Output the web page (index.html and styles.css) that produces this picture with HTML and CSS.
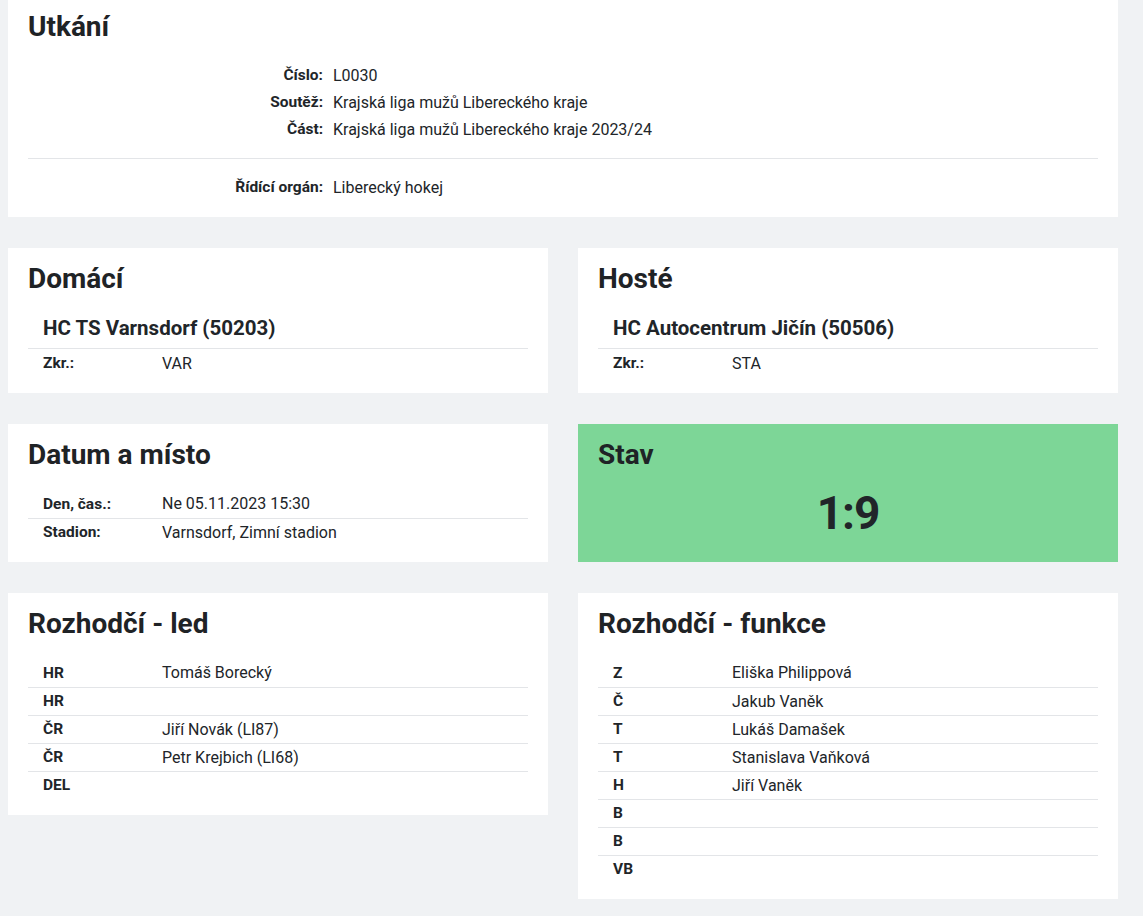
FILE: index.html
```html
<!DOCTYPE html>
<html lang="cs">
<head>
<meta charset="utf-8">
<title>Utkání</title>
<link rel="stylesheet" href="styles.css">
</head>
<body>
<div class="page">
  <section class="card card-wide card-top">
    <h2 class="card-title">Utkání</h2>
    <dl class="info">
      <dt>Číslo:</dt><dd>L0030</dd>
      <dt>Soutěž:</dt><dd>Krajská liga mužů Libereckého kraje</dd>
      <dt>Část:</dt><dd>Krajská liga mužů Libereckého kraje 2023/24</dd>
    </dl>
    <hr class="sep">
    <dl class="info">
      <dt>Řídící orgán:</dt><dd>Liberecký hokej</dd>
    </dl>
  </section>

  <section class="card">
    <h2 class="card-title">Domácí</h2>
    <div class="team">HC TS Varnsdorf (50203)</div>
    <table class="tbl">
      <tr><th>Zkr.:</th><td>VAR</td></tr>
    </table>
  </section>

  <section class="card">
    <h2 class="card-title">Hosté</h2>
    <div class="team">HC Autocentrum Jičín (50506)</div>
    <table class="tbl">
      <tr><th>Zkr.:</th><td>STA</td></tr>
    </table>
  </section>

  <section class="card">
    <h2 class="card-title">Datum a místo</h2>
    <table class="tbl tbl-gap">
      <tr><th>Den, čas.:</th><td>Ne 05.11.2023 15:30</td></tr>
      <tr><th>Stadion:</th><td>Varnsdorf, Zimní stadion</td></tr>
    </table>
  </section>

  <section class="card card-score">
    <h2 class="card-title">Stav</h2>
    <div class="score">1:9</div>
  </section>

  <section class="card card-start">
    <h2 class="card-title">Rozhodčí - led</h2>
    <table class="tbl tbl-gap">
      <tr><th>HR</th><td>Tomáš Borecký</td></tr>
      <tr><th>HR</th><td></td></tr>
      <tr><th>ČR</th><td>Jiří Novák (LI87)</td></tr>
      <tr><th>ČR</th><td>Petr Krejbich (LI68)</td></tr>
      <tr><th>DEL</th><td></td></tr>
    </table>
  </section>

  <section class="card card-start">
    <h2 class="card-title">Rozhodčí - funkce</h2>
    <table class="tbl tbl-gap">
      <tr><th>Z</th><td>Eliška Philippová</td></tr>
      <tr><th>Č</th><td>Jakub Vaněk</td></tr>
      <tr><th>T</th><td>Lukáš Damašek</td></tr>
      <tr><th>T</th><td>Stanislava Vaňková</td></tr>
      <tr><th>H</th><td>Jiří Vaněk</td></tr>
      <tr><th>B</th><td></td></tr>
      <tr><th>B</th><td></td></tr>
      <tr><th>VB</th><td></td></tr>
    </table>
  </section>
</div>
</body>
</html>
```

FILE: styles.css
```css
* { box-sizing: border-box; }

html, body {
  margin: 0;
  padding: 0;
  background: #f0f2f4;
}

body {
  font-family: Roboto, "Liberation Sans", sans-serif;
  font-size: 15px;
  color: #212529;
}

.page {
  width: 1110px;
  margin: -4px 0 0 8px;
  display: grid;
  grid-template-columns: 1fr 1fr;
  gap: 31px 30px;
  align-items: stretch;
  padding-bottom: 20px;
}

.card {
  background: #fff;
  padding: 16px 20px 16px 20px;
}

.card-wide {
  grid-column: 1 / -1;
}

.card-start {
  align-self: start;
}

.card-score {
  background: #7dd697;
}

.card-title {
  margin: 0;
  font-size: 28px;
  line-height: 30px;
  font-weight: 700;
  color: #1f2326;
}

.info {
  margin: 0;
  display: grid;
  grid-template-columns: 295px 1fr;
  column-gap: 10px;
  line-height: 27px;
}

.card-title + .info {
  margin-top: 20px;
}

.info dt {
  font-weight: 700;
  font-size: 15.5px;
  text-align: right;
}

.info dd {
  margin: 0;
  font-size: 16px;
}

.sep {
  border: 0;
  border-top: 1px solid #e3e5e8;
  margin: 15px 0 15px 0;
}

.team {
  margin-top: 22px;
  padding: 0 15px 8px;
  font-size: 20.5px;
  line-height: 24px;
  font-weight: 700;
  border-bottom: 1px solid #e3e5e8;
}

.tbl {
  width: 100%;
  border-collapse: collapse;
}

.tbl-gap {
  margin-top: 20px;
}

.tbl tr + tr th,
.tbl tr + tr td {
  border-top: 1px solid #e3e5e8;
}

.tbl th,
.tbl td {
  height: 28px;
  padding: 0 15px;
  text-align: left;
  vertical-align: middle;
}

.tbl th {
  width: 119px;
  font-weight: 700;
  font-size: 15.5px;
}

.tbl td {
  font-size: 16px;
}

.score {
  margin-top: 18px;
  text-align: center;
  font-size: 46px;
  line-height: 50px;
  font-weight: 700;
  letter-spacing: -1px;
}
```
